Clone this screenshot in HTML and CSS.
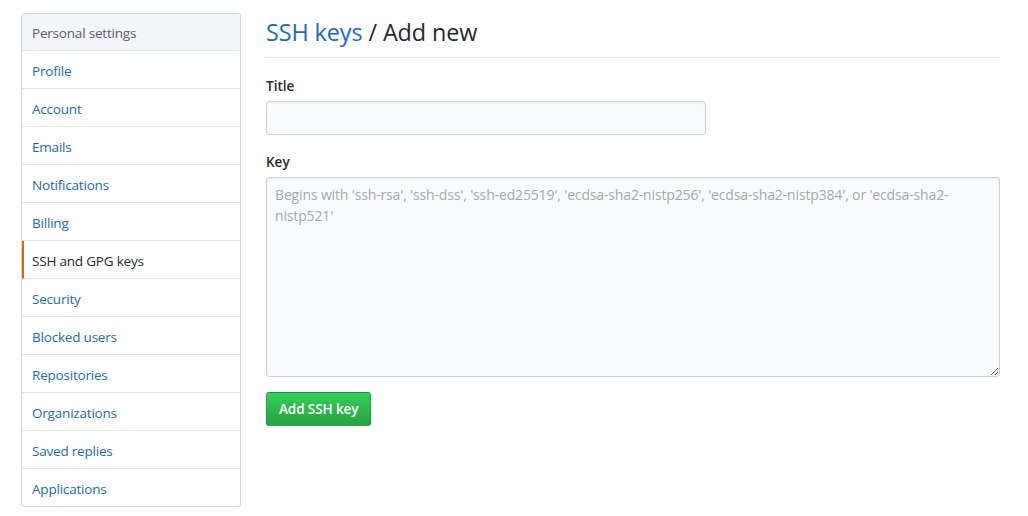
FILE: index.html
```html
<!DOCTYPE html>
<html>
<head>
<meta charset="utf-8">
<link rel="stylesheet" href="styles.css">
</head>
<body>
<div class="page">
  <nav class="menu">
    <div class="menu-heading">Personal settings</div>
    <a class="menu-item">Profile</a>
    <a class="menu-item">Account</a>
    <a class="menu-item">Emails</a>
    <a class="menu-item">Notifications</a>
    <a class="menu-item">Billing</a>
    <a class="menu-item selected">SSH and GPG keys</a>
    <a class="menu-item">Security</a>
    <a class="menu-item">Blocked users</a>
    <a class="menu-item">Repositories</a>
    <a class="menu-item">Organizations</a>
    <a class="menu-item">Saved replies</a>
    <a class="menu-item">Applications</a>
  </nav>
  <main class="content">
    <h2 class="subhead"><a class="subhead-link">SSH keys</a> / Add new</h2>
    <form class="form">
      <label class="label">Title</label>
      <input class="input title-input" type="text">
      <label class="label key-label">Key</label>
      <textarea class="input key-input" placeholder="Begins with 'ssh-rsa', 'ssh-dss', 'ssh-ed25519', 'ecdsa-sha2-nistp256', 'ecdsa-sha2-nistp384', or 'ecdsa-sha2-nistp521'"></textarea>
      <div class="actions"><button type="button" class="btn">Add SSH key</button></div>
    </form>
  </main>
</div>
</body>
</html>
```
FILE: styles.css
```css
* { box-sizing: border-box; }
html, body { margin: 0; padding: 0; background: #fff; }
body {
  font-family: "Open Sans", "Noto Sans", sans-serif;
  font-size: 14px;
  color: #24292e;
}
.page {
  display: flex;
  gap: 25px;
  padding: 13px 28px 0 21px;
}
.menu {
  width: 220px;
  flex: none;
  border: 1px solid #d1d5da;
  border-radius: 3px;
  display: flex;
  flex-direction: column;
}
.menu-heading {
  height: 37px;
  line-height: 34px;
  padding: 2px 10px 0;
  background: #f3f5f8;
  color: #586069;
  font-size: 13.5px;
  border-bottom: 1px solid #e1e4e8;
  letter-spacing: -0.2px;
}
.menu-item {
  height: 38px;
  padding: 3px 10px 0;
  line-height: 34px;
  color: #1a6dbb;
  font-size: 13.5px;
  border-bottom: 1px solid #e1e4e8;
  letter-spacing: -0.2px;
}
.menu-item:last-child { border-bottom: 0; height: 37px; }
.menu-item.selected {
  color: #24292e;
  border-left: 2px solid #e36209;
  padding-left: 8px;
}
.content { flex: 1; min-width: 0; }
.subhead {
  margin: 0;
  font-weight: 400;
  font-size: 23.4px;
  line-height: 38px;
  padding-bottom: 6px;
  border-bottom: 1px solid #e1e4e8;
  letter-spacing: -0.1px;
}
.subhead-link { color: #1a6dbb; }
.form { display: flex; flex-direction: column; align-items: flex-start; }
.label {
  font-weight: 600;
  font-size: 13.5px;
  margin-top: 18px;
  line-height: 20px;
  margin-bottom: 5px;
}
.key-label { margin-top: 17px; }
.input {
  border: 1px solid #d1d5da;
  border-radius: 3px;
  background: #fafbfc;
  box-shadow: inset 0 1px 2px rgba(27,31,35,0.075);
  font-family: inherit;
  font-size: 14px;
  color: #24292e;
}
.title-input { width: 440px; height: 34px; padding: 6px 8px; }
.key-input {
  width: 100%;
  height: 200px;
  padding: 6px 8px;
  resize: vertical;
  line-height: 21px;
  letter-spacing: -0.15px;
}
.key-input::placeholder { color: #a3aab1; }
.actions { margin-top: 15px; display: flex; }
.btn {
  height: 34px;
  padding: 0 12px;
  font-family: inherit;
  font-size: 13.5px;
  font-weight: 600;
  color: #fff;
  background: linear-gradient(#34d058, #28a745 90%);
  border: 1px solid rgba(27,31,35,0.2);
  border-radius: 3px;
  letter-spacing: -0.1px;
}
```
